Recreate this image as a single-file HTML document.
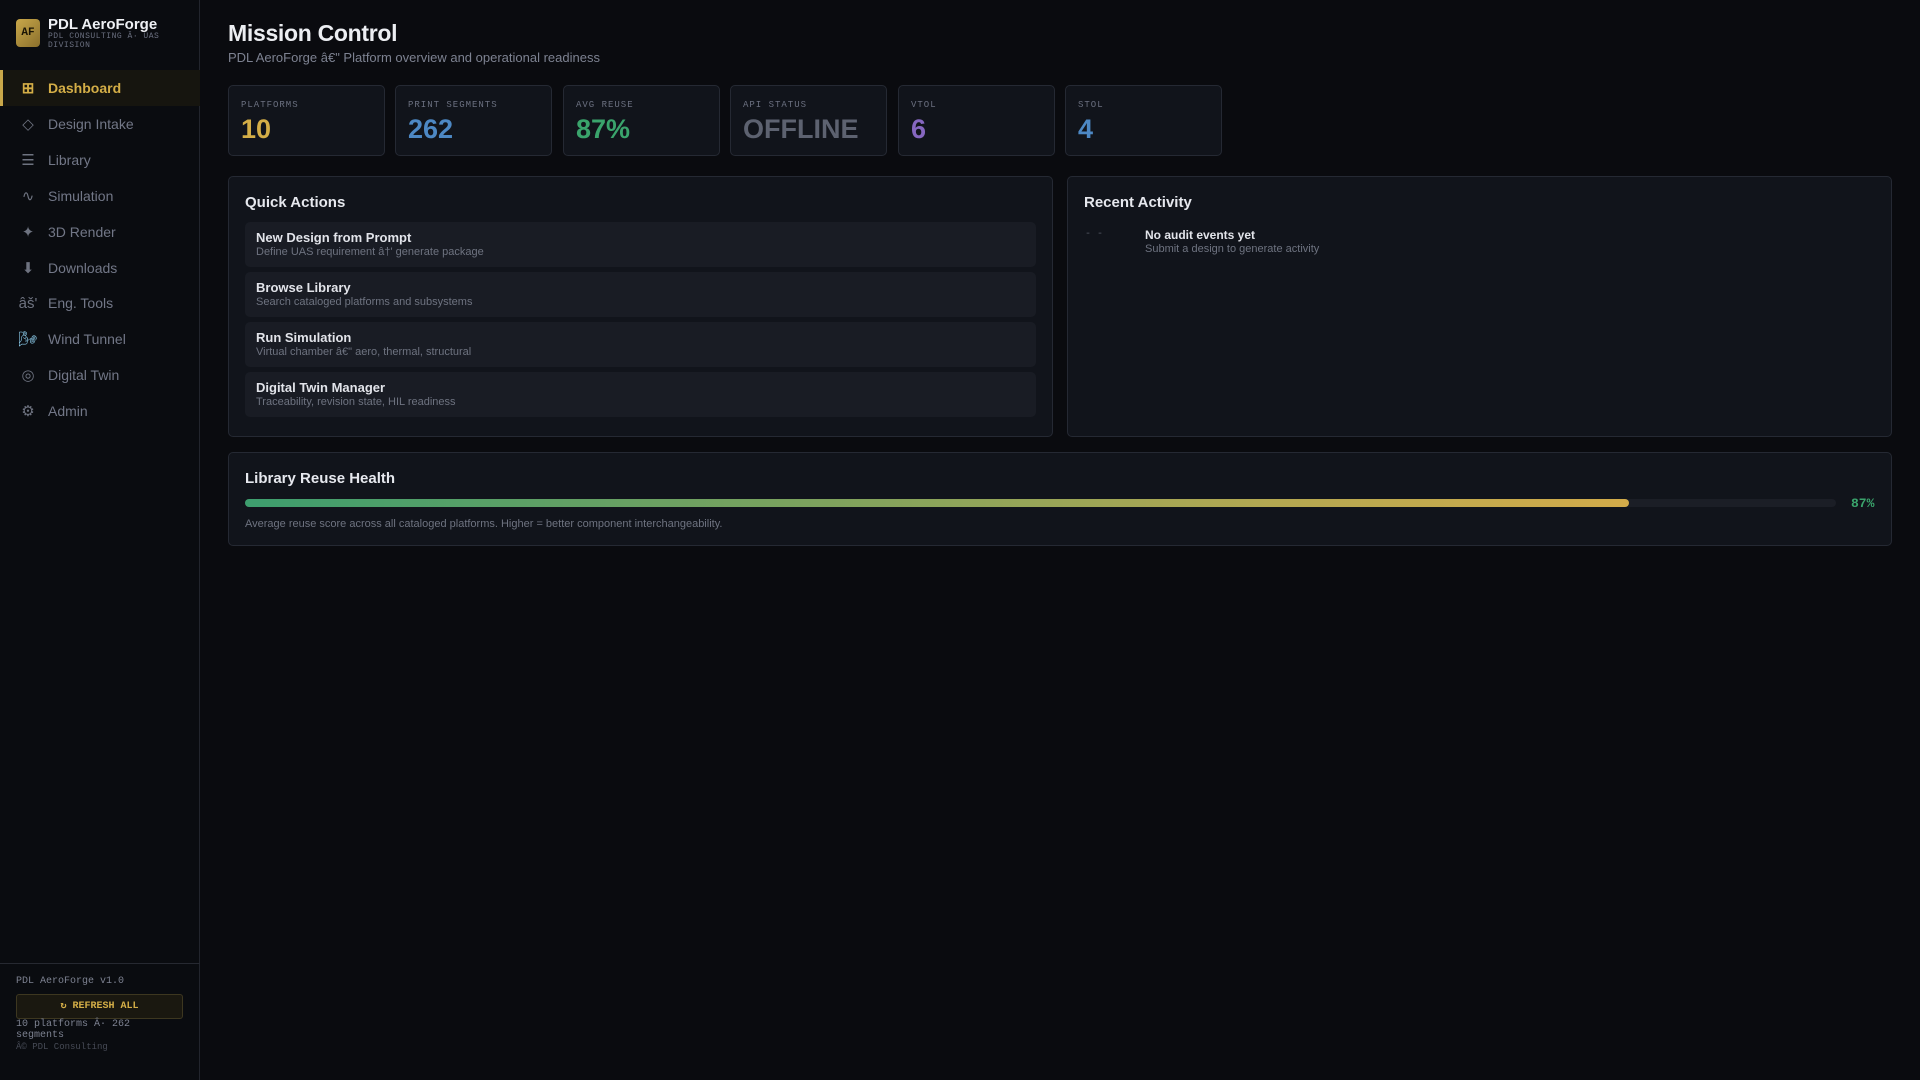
<!DOCTYPE html>
<html><head><meta charset="utf-8"><style>
*{box-sizing:border-box;margin:0;padding:0}
body{width:1920px;height:1080px;background:#0a0b0f;font-family:"Liberation Sans",sans-serif;color:#e6e8ee;position:relative;overflow:hidden}
.mono{font-family:"Liberation Mono",monospace}
#side{position:absolute;left:0;top:0;width:200px;height:1080px;background:#0a0c10;border-right:1px solid #22252d}
.logo{position:absolute;left:16px;top:19px;width:24px;height:28px;border-radius:4px;background:linear-gradient(135deg,#c9a84a,#8a6f2c);color:#1a1405;font:bold 11px "Liberation Mono",monospace;display:flex;align-items:center;justify-content:center}
.brand{position:absolute;left:48px;top:16px;font-size:15px;font-weight:bold;color:#eef0f4}
.sub{position:absolute;left:48px;top:32px;font-size:8px;line-height:9px;color:#6b7080;letter-spacing:.5px;width:140px}
.nav{position:absolute;left:0;width:200px;height:36px;display:flex;align-items:center;font-size:14px;color:#727787}
.nav .ic{width:48px;text-align:center;font-size:15px;color:#6e7380;padding-left:8px}
.nav.act{background:#16150f;border-left:3px solid #c9a84a;color:#d4ae47;font-weight:bold}
.nav.act .ic{color:#d4ae47;padding-left:5px;width:45px}
#foot{position:absolute;left:0;top:963px;width:200px;border-top:1px solid #262931}
.card{position:absolute;top:85px;width:157px;height:71px;background:#11141b;border:1px solid #252933;border-radius:5px}
.card .l{position:absolute;left:12px;top:14px;font:9px "Liberation Mono",monospace;letter-spacing:1px;color:#6b7080}
.card .v{position:absolute;left:12px;top:28px;font-size:27px;font-weight:bold}
.panel{position:absolute;background:#11141b;border:1px solid #252933;border-radius:5px}
.panel h3{position:absolute;left:16px;top:17px;font-size:15px;color:#e6e8ee}
.qa{position:absolute;left:16px;width:791px;height:45px;background:#191c24;border-radius:5px;padding:8px 11px}
.qa b{display:block;font-size:13px;color:#e2e4ea}
.qa span{display:block;font-size:11px;color:#6e7380;margin-top:1px}
</style></head><body>
<div id="side">
<div class="logo">AF</div>
<div class="brand">PDL AeroForge</div>
<div class="sub mono">PDL CONSULTING Â· UAS DIVISION</div>
<div class="nav act" style="top:70px"><span class="ic">⊞</span>Dashboard</div>
<div class="nav" style="top:106px"><span class="ic">◇</span>Design Intake</div>
<div class="nav" style="top:142px"><span class="ic">☰</span>Library</div>
<div class="nav" style="top:178px"><span class="ic">∿</span>Simulation</div>
<div class="nav" style="top:214px"><span class="ic">✦</span>3D Render</div>
<div class="nav" style="top:250px"><span class="ic">⬇</span>Downloads</div>
<div class="nav" style="top:285px"><span class="ic">âš'</span>Eng. Tools</div>
<div class="nav" style="top:321px"><span class="ic" style="color:#8fd0f0">🌬</span>Wind Tunnel</div>
<div class="nav" style="top:357px"><span class="ic">◎</span>Digital Twin</div>
<div class="nav" style="top:393px"><span class="ic">⚙</span>Admin</div>
<div id="foot">
<div class="mono" style="position:absolute;left:16px;top:12px;font-size:10px;color:#7d8291">PDL AeroForge v1.0</div>
<div class="mono" style="position:absolute;left:16px;top:30px;width:167px;height:25px;border:1px solid #3d3720;background:#1a1810;border-radius:3px;color:#d4ae47;font-size:10px;font-weight:bold;text-align:center;line-height:23px">↻ REFRESH ALL</div>
<div class="mono" style="position:absolute;left:16px;top:55px;font-size:10px;line-height:11px;color:#7d8291;width:150px">10 platforms Â· 262 segments</div>
<div class="mono" style="position:absolute;left:16px;top:78px;font-size:9px;color:#464a55">Â© PDL Consulting</div>
</div>
</div>
<div style="position:absolute;left:228px;top:20px;font-size:23px;font-weight:bold;color:#eceef2;letter-spacing:-.3px">Mission Control</div>
<div style="position:absolute;left:228px;top:50px;font-size:13px;color:#7d8291">PDL AeroForge â€" Platform overview and operational readiness</div>
<div class="card" style="left:228px"><div class="l">PLATFORMS</div><div class="v" style="color:#d4ae47">10</div></div>
<div class="card" style="left:395px"><div class="l">PRINT SEGMENTS</div><div class="v" style="color:#4d88c4">262</div></div>
<div class="card" style="left:563px"><div class="l">AVG REUSE</div><div class="v" style="color:#3aa46c">87%</div></div>
<div class="card" style="left:730px"><div class="l">API STATUS</div><div class="v" style="color:#5d6270">OFFLINE</div></div>
<div class="card" style="left:898px"><div class="l">VTOL</div><div class="v" style="color:#8667c0">6</div></div>
<div class="card" style="left:1065px"><div class="l">STOL</div><div class="v" style="color:#4d88c4">4</div></div>
<div class="panel" style="left:228px;top:176px;width:825px;height:261px">
<h3>Quick Actions</h3>
<div class="qa" style="top:45px"><b>New Design from Prompt</b><span>Define UAS requirement â†' generate package</span></div>
<div class="qa" style="top:95px"><b>Browse Library</b><span>Search cataloged platforms and subsystems</span></div>
<div class="qa" style="top:145px"><b>Run Simulation</b><span>Virtual chamber â€" aero, thermal, structural</span></div>
<div class="qa" style="top:195px"><b>Digital Twin Manager</b><span>Traceability, revision state, HIL readiness</span></div>
</div>
<div class="panel" style="left:1067px;top:176px;width:825px;height:261px">
<h3>Recent Activity</h3>
<div class="mono" style="position:absolute;left:17px;top:52px;font-size:10px;color:#555a66">- -</div>
<div style="position:absolute;left:77px;top:51px;font-size:12px;font-weight:bold;color:#e2e4ea">No audit events yet</div>
<div style="position:absolute;left:77px;top:66px;font-size:11px;color:#6e7380">Submit a design to generate activity</div>
</div>
<div class="panel" style="left:228px;top:452px;width:1664px;height:94px">
<h3>Library Reuse Health</h3>
<div style="position:absolute;left:16px;top:46px;width:1591px;height:8px;border-radius:4px;background:#1b1e26"><div style="width:87%;height:8px;border-radius:4px;background:linear-gradient(90deg,#3d9e6e,#7ba25e 40%,#b5a851 75%,#d2ab4a)"></div></div>
<div class="mono" style="position:absolute;left:1622px;top:43px;font-size:13px;font-weight:bold;color:#3aa46c">87%</div>
<div style="position:absolute;left:16px;top:65px;font-size:11px;color:#6e7380">Average reuse score across all cataloged platforms. Higher = better component interchangeability.</div>
</div>
</body></html>
